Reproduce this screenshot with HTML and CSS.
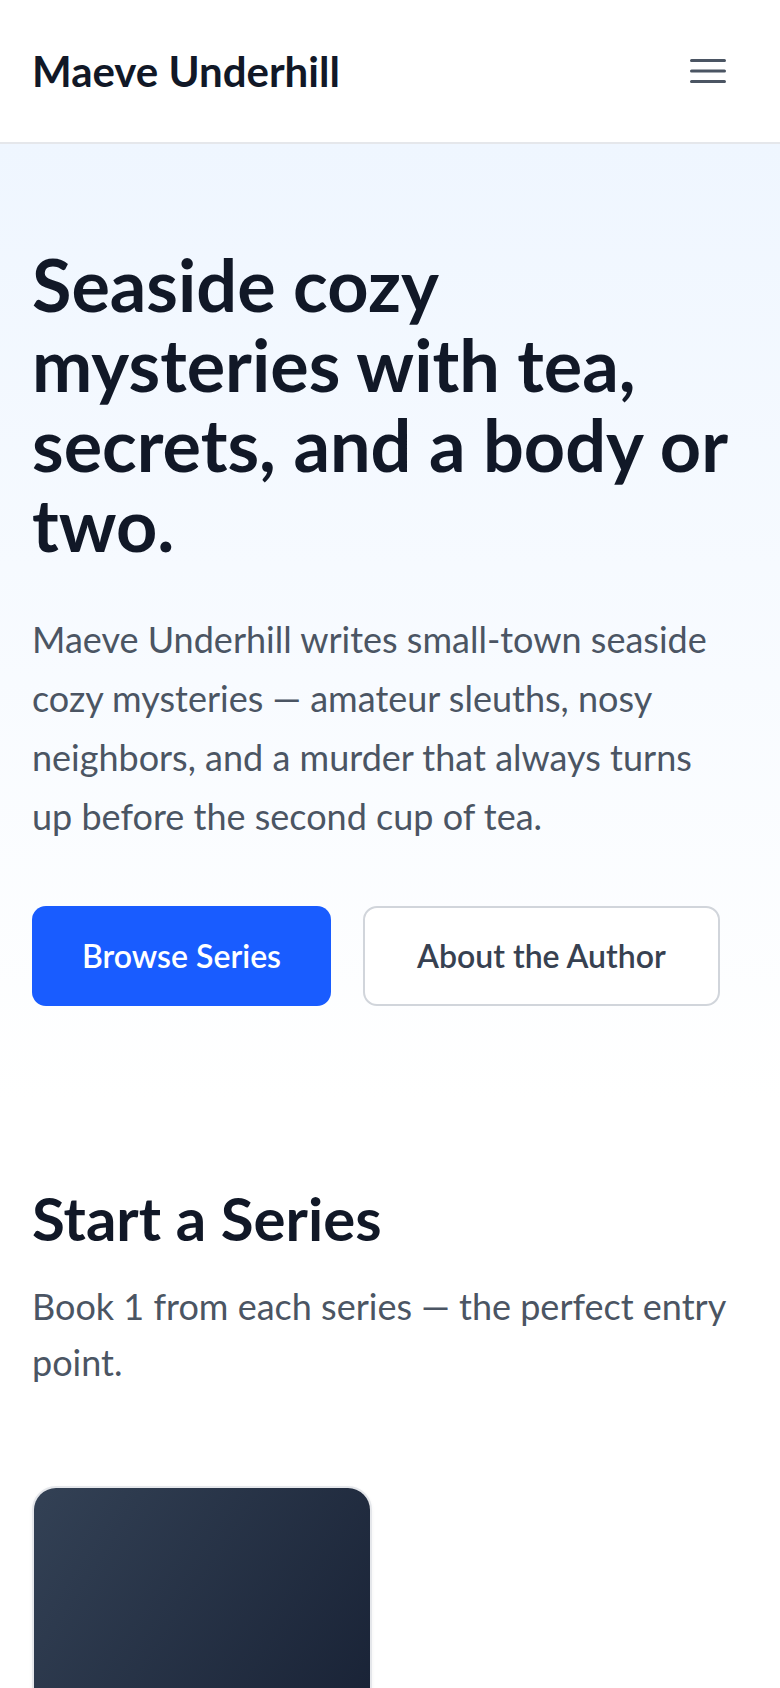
FILE: index.html
```html
<!DOCTYPE html>
<html lang="en">
  <head>
    <meta charset="UTF-8" />
    <meta name="viewport" content="width=device-width, initial-scale=1.0" />
    <title>Maeve Underhill - Seaside Cozy Mysteries</title>
    <link rel="stylesheet" href="styles.css">
  </head>
  <body>
    <header class="site-header">
      <a class="brand" href="#">Maeve Underhill</a>
      <button class="menu-btn" aria-label="Open menu">
        <svg viewBox="0 0 24 24" fill="none" stroke="currentColor" stroke-width="1.5">
          <path stroke-linecap="round" stroke-linejoin="round" d="M3.75 6.75h16.5M3.75 12h16.5m-16.5 5.25h16.5" />
        </svg>
      </button>
    </header>

    <main>
      <section class="hero">
        <h1>Seaside cozy mysteries with tea, secrets, and a body or two.</h1>
        <p>
          Maeve Underhill writes small-town seaside cozy mysteries — amateur
          sleuths, nosy neighbors, and a murder that always turns up before the
          second cup of tea.
        </p>
        <div class="hero-actions">
          <a class="btn btn-primary" href="#series">Browse Series</a>
          <a class="btn btn-outline" href="#about">About the Author</a>
        </div>
      </section>

      <section class="series" id="series">
        <h2>Start a Series</h2>
        <p class="section-sub">Book 1 from each series — the perfect entry point.</p>

        <div class="book-grid">
          <article class="book-card">
            <div class="book-cover"></div>
          </article>
        </div>
      </section>
    </main>
  </body>
</html>
```

FILE: styles.css
```css
body {
  font-family: "Lato", "Segoe UI", sans-serif;
  background: #fff;
  color: #111827;
  margin: 0;
  padding: 0;
}

a {
  text-decoration: none;
}

.site-header {
  height: 144px;
  box-sizing: border-box;
  padding: 0 32px;
  display: flex;
  align-items: center;
  justify-content: space-between;
  background: #fff;
  border-bottom: 2px solid #e5e7eb;
}

.brand {
  font-size: 42px;
  line-height: 56px;
  font-weight: 700;
  color: #111827;
}

.menu-btn {
  display: flex;
  padding: 16px;
  border: none;
  background: none;
  color: #4b5563;
  cursor: pointer;
}

.menu-btn svg {
  width: 48px;
  height: 48px;
}

.hero {
  padding: 100px 32px 96px;
  background: linear-gradient(to bottom, #eff6ff, #fff);
}

.hero h1 {
  margin: 0;
  font-size: 72px;
  line-height: 80px;
  font-weight: 700;
  color: #111827;
}

.hero p {
  margin: 46px 0 0;
  max-width: 690px;
  font-size: 36px;
  line-height: 59px;
  color: #4b5563;
}

.hero-actions {
  display: flex;
  gap: 32px;
  margin-top: 60px;
}

.btn {
  display: inline-block;
  padding: 24px 48px;
  border: 2px solid transparent;
  border-radius: 14px;
  font-size: 32px;
  line-height: 48px;
  font-weight: 600;
}

.btn-primary {
  background-color: #195cff;
  color: #fff;
}

.btn-outline {
  padding: 24px 52px;
  background-color: #fff;
  border-color: #d1d5db;
  color: #374151;
}

.series {
  padding: 80px 32px;
}

.series h2 {
  margin: 0;
  font-size: 60px;
  line-height: 72px;
  font-weight: 700;
  color: #111827;
}

.section-sub {
  margin: 24px 0 0;
  font-size: 36px;
  line-height: 56px;
  color: #4b5563;
}

.book-grid {
  display: grid;
  grid-template-columns: repeat(2, 1fr);
  gap: 36px;
  margin-top: 96px;
}

.book-card {
  border: 2px solid #e5e7eb;
  border-radius: 24px;
  overflow: hidden;
  background: #fff;
  box-shadow: 0 2px 4px rgba(0, 0, 0, 0.05);
}

.book-cover {
  aspect-ratio: 2 / 3;
  background: linear-gradient(to bottom right, #334155, #0f172a);
}
```
